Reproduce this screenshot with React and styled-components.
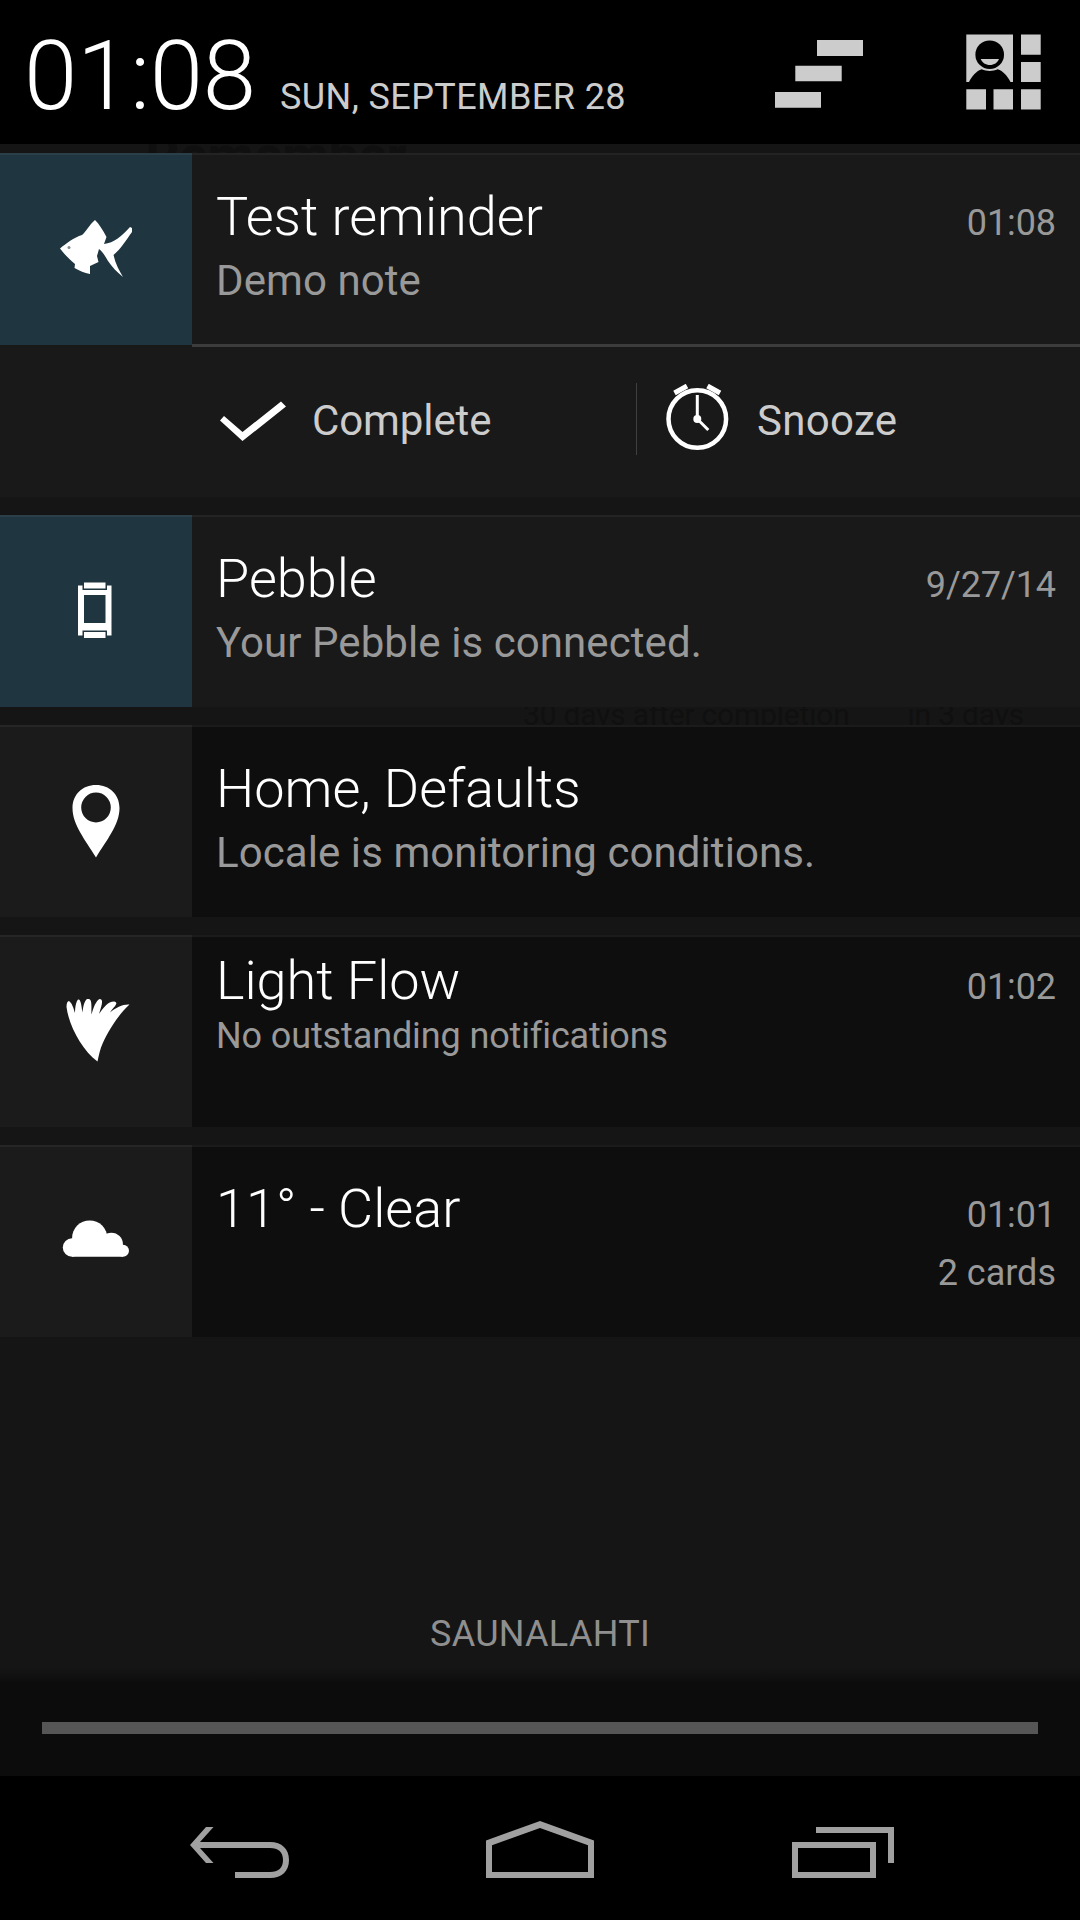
import React from 'react';
import styled, { createGlobalStyle } from 'styled-components';

const GlobalStyle = createGlobalStyle`
    * {
        box-sizing: border-box;
    }
    body {
        margin: 0;
        background: #000;
        font-family: Roboto, 'Liberation Sans', sans-serif;
    }
    svg {
        display: block;
        flex: none;
    }
`;

const Screen = styled.div`
    width: 1080px;
    height: 1920px;
    display: flex;
    flex-direction: column;
    background: #151515;
    overflow: hidden;
`;

const Header = styled.header`
    height: 144px;
    flex: none;
    display: flex;
    background: #000;
`;

const HeaderText = styled.div`
    flex: 1;
    display: flex;
    align-items: baseline;
    padding: 20px 0 0 24px;
    white-space: nowrap;
`;

const Clock = styled.div`
    width: 256px;
    font-size: 96px;
    line-height: 112px;
    font-weight: 300;
    letter-spacing: -0.3px;
    color: #fff;
`;

const DateText = styled.div`
    font-size: 36px;
    letter-spacing: 0.42px;
    color: #ccc;
`;

const HeaderIcons = styled.div`
    display: flex;
    gap: 102px;
    padding: 34px 39px 0 0;
`;

// strip between two notifications, the app underneath shines through a little
const Gap = styled.div`
    height: ${props => props.$height}px;
    flex: none;
    display: flex;
    justify-content: ${props => props.$end ? 'flex-end' : 'flex-start'};
    padding: ${props => props.$pad};
    overflow: hidden;
    background: #151515;
`;

const Ghost = styled.div`
    font-size: ${props => props.$size}px;
    line-height: ${props => props.$line}px;
    margin-top: ${props => props.$shift}px;
    font-weight: ${props => props.$bold ? 700 : 400};
    letter-spacing: ${props => props.$bold ? -0.6 : -0.2}px;
    color: #101010;
    white-space: pre;
`;

const Row = styled.section`
    height: 192px;
    flex: none;
    display: flex;
    background: ${props => props.$dark ? '#0e0e0e' : '#191919'};
    box-shadow: inset 0 2px 0 ${props => props.$dark ? '#1b1b1b' : '#232323'};
`;

const IconCell = styled.div`
    width: 192px;
    height: 192px;
    flex: none;
    display: flex;
    align-items: center;
    justify-content: center;
    background: ${props => props.$teal ? '#1f353f' : '#1b1b1b'};
    box-shadow: inset 0 2px 0 ${props => props.$teal ? '#2a3f47' : '#262626'};
`;

const Content = styled.div`
    flex: 1;
    padding: ${props => props.$compact ? 14 : 32}px 24px 0 24px;
    border-bottom: ${props => props.$line ? '1px solid #3c3c3c' : 'none'};
`;

const Line = styled.div`
    display: flex;
    justify-content: space-between;
    align-items: baseline;
    white-space: nowrap;
`;

const Title = styled.div`
    font-size: 54px;
    line-height: 64px;
    font-weight: 300;
    color: #fff;
`;

const Time = styled.div`
    font-size: 36px;
    letter-spacing: -0.1px;
    color: #999;
`;

const SubText = styled.div`
    margin-top: ${props => props.$small ? 2 : 7}px;
    font-size: ${props => props.$small ? 36 : 42}px;
    line-height: ${props => props.$small ? 42 : 50}px;
    letter-spacing: ${props => props.$small ? -0.12 : 0.08}px;
    color: #999;
    white-space: nowrap;
`;

const CardCount = styled.div`
    margin-top: 11px;
    font-size: 36px;
    line-height: 42px;
    color: #999;
    text-align: right;
`;

const Actions = styled.div`
    height: 152px;
    flex: none;
    display: flex;
    padding-left: 192px;
    background: #191919;
`;

const ActionArea = styled.div`
    flex: 1;
    display: grid;
    grid-template-columns: 444px 1fr;
    border-top: 2px solid #3c3c3c;
`;

const Action = styled.div`
    height: 72px;
    margin-top: 36px;
    display: flex;
    align-items: center;
    padding-left: ${props => props.$divider ? 29 : 26}px;
    border-left: 1px solid ${props => props.$divider ? '#3f3f3f' : 'transparent'};
`;

const ActionLabel = styled.span`
    margin: 4px 0 0 ${props => props.$offset}px;
    font-size: 42px;
    line-height: 50px;
    letter-spacing: ${props => props.$spacing || 0}px;
    color: #ccc;
`;

const Carrier = styled.div`
    flex: 1;
    display: flex;
    align-items: flex-end;
    justify-content: center;
    padding-bottom: 13px;
    font-size: 36px;
    line-height: 42px;
    letter-spacing: 0.3px;
    color: #8f8f8f;
`;

const Handle = styled.div`
    height: 108px;
    flex: none;
    display: flex;
    align-items: center;
    padding: 12px 42px 0;
    background: linear-gradient(#151515, #0c0c0c 16px, #0c0c0c);
`;

const HandleBar = styled.div`
    width: 100%;
    height: 12px;
    background: #565656;
`;

const NavBar = styled.nav`
    height: 144px;
    flex: none;
    display: grid;
    grid-template-columns: 296px 304px 302px;
    padding: 4px 86px 0 92px;
    align-items: center;
    justify-items: center;
    background: #000;
`;

const ClearIcon = () => (
    <svg width="90" height="76" viewBox="774 34 90 76" fill="#ccc">
        <path d="M817 40h46v16h-46zM795.3 65.7h46.4v15.6h-46.4zM775 92h46v15.7h-46z" />
    </svg>
);

const QuickSettingsIcon = () => (
    <svg width="75" height="76" viewBox="966 34 75 76" fill="#ccc">
        <path d="M966.3 34.5H1013V82h-46.7zM1021 34.5h19.7v20.2H1021zM1021 62h19.7v20H1021zM1021 89.2h19.7v20.3H1021zM966.3 89.2H986v20.3h-19.7zM993.5 89.2h19.5v20.3h-19.5z" />
        <path d="M969 82c3-6 7.500-11 12.700-12.700 5 2.300 11 2.300 16 0C1003 71 1007.500 76 1010.500 82z" fill="#000" />
        <circle cx="989.700" cy="54.700" r="14.300" fill="#000" />
        <path d="M980.700 59h18.300c-1.500 3.800-5 6-9.150 6s-7.650-2.200-9.150-6z" />
    </svg>
);

const FishIcon = () => (
    <svg width="72" height="64" viewBox="60 217 72 64" fill="#fff">
        <path d="M60 248.500c6-5 14-11 22-13.500 4-3 7-10 13-15 4 4 8 10 11.500 17l-2.500 7c10-1 18-8 26-17l2 1v4c-6 8-11 17-18.500 23 2 9 6 16 9.500 22-6-5-11-10-15-16-3-5-5-9-9-12l-2 7 1.500 6-8.500 4v8c-6-1-10-3-15.500-6l.5-4c-6-5-10-9-15-15.500z" />
        <circle cx="69" cy="247.500" r="1.500" fill="#8a8a8a" />
    </svg>
);

const PebbleIcon = () => (
    <svg width="36" height="58" viewBox="78 582 36 58" fill="#fff">
        <path fillRule="evenodd" d="M84 582.500h21.500v6H84zM84 632h21.500v6H84zM78 585.500h4.500v4.500h24.500v-4.500h4.500v50H107V630.500H82.500v5H78zM84 595v28h21.500v-28z" />
    </svg>
);

const PinIcon = () => (
    <svg width="48" height="74" viewBox="72 784 48 74" fill="#fff">
        <path fillRule="evenodd" d="M96 785c13.500 0 23.500 9.500 23.500 23 0 17-13 32-23.500 49.500C85.500 840 72.500 825 72.500 808c0-13.500 10-23 23.500-23zm0 7.500a14.800 15 0 1 0 0 30 14.800 15 0 1 0 0-30z" />
    </svg>
);

const FeatherIcon = () => (
    <svg width="68" height="64" viewBox="62 999 68 64" fill="#fff">
        <path d="M97.500 1061.500C82 1050 69 1026 66.500 1007c0-4 1-6 2.500-6 3 2 4.500 7 6 12 0-6 1-11 3-13.500 3-1 3.500 7 4.500 13 .5-5 1.500-11 4.500-13.500 6-1.500 4 8 4.500 15.500 2-7 4-13 8-15.500 5 0 1.500 8-.5 15 4-6 9-12.500 15-12.500 6 1-1 6-4 11 6-5 13-8.500 19.500-8-12 11-23 29-28.500 43-1.500 5-2.500 9-3.500 14z" />
    </svg>
);

const CloudIcon = () => (
    <svg width="68" height="42" viewBox="62 1220 68 42" fill="#fff">
        <circle cx="89.700" cy="1238" r="17.600" />
        <circle cx="72" cy="1247.500" r="9.200" />
        <circle cx="111.400" cy="1244.200" r="11.500" />
        <circle cx="123" cy="1250.700" r="6" />
        <path d="M72 1242h45l6 6v8.700H72z" />
    </svg>
);

const CheckIcon = () => (
    <svg width="68" height="46" viewBox="219 396 68 46" fill="#fff">
        <path d="M220 420.500l4-4.500 18.500 16L281 401.500l5 5L242.500 441z" />
    </svg>
);

const AlarmIcon = () => (
    <svg width="64" height="70" viewBox="666 384 64 70" fill="none" stroke="#fff">
        <circle cx="697.300" cy="419" r="28.800" strokeWidth="4.500" />
        <path d="M674.500 393l12.500-7M707.500 386l12.500 7" strokeWidth="5" />
        <path d="M697.300 395v24l11 11" strokeWidth="3" />
        <circle cx="697.300" cy="419" r="4" fill="#fff" stroke="none" />
    </svg>
);

const BackIcon = () => (
    <svg width="100" height="60" viewBox="190 1820 100 60" fill="#a0a0a0">
        <path d="M190 1845l16-18h7.500l-13.500 15h70c12 0 19 7 19 18s-7 18-19 18h-35v-6h35c8.500 0 13-4 13-12s-4.500-12-13-12h-70l13.500 15H206z" />
    </svg>
);

const HomeIcon = () => (
    <svg width="108" height="60" viewBox="486 1820 108 60" fill="#a0a0a0">
        <path fillRule="evenodd" d="M540 1821l54 19.500V1878H486v-37.500zM540 1828l-48 17.200V1872h96v-26.800z" />
    </svg>
);

const RecentIcon = () => (
    <svg width="102" height="60" viewBox="792 1820 102 60" fill="#a0a0a0">
        <path fillRule="evenodd" d="M816 1827h78v36h-6v-30h-72zM792 1842h84v36h-84zM798 1848v24h72v-24z" />
    </svg>
);

const notifications = [
    { id: 'reminder', icon: <FishIcon />, teal: true, title: 'Test reminder', time: '01:08', text: 'Demo note', actions: true },
    { id: 'pebble', icon: <PebbleIcon />, teal: true, title: 'Pebble', time: '9/27/14', text: 'Your Pebble is connected.' },
    { id: 'locale', icon: <PinIcon />, title: 'Home, Defaults', text: 'Locale is monitoring conditions.' },
    { id: 'lightflow', icon: <FeatherIcon />, title: 'Light Flow', time: '01:02', text: 'No outstanding notifications', compact: true },
    { id: 'weather', icon: <CloudIcon />, title: '11° - Clear', time: '01:01', cards: '2 cards' },
];

const Notification = ({ icon, teal, title, time, text, cards, compact, actions }) => (
    <>
        <Row $dark={!teal}>
            <IconCell $teal={teal}>{icon}</IconCell>
            <Content $compact={compact} $line={actions}>
                <Line>
                    <Title>{title}</Title>
                    {time && <Time>{time}</Time>}
                </Line>
                {text && <SubText $small={compact}>{text}</SubText>}
                {cards && <CardCount>{cards}</CardCount>}
            </Content>
        </Row>
        {actions && (
            <Actions>
                <ActionArea>
                    <Action>
                        <CheckIcon />
                        <ActionLabel $offset={25} $spacing={-0.1}>Complete</ActionLabel>
                    </Action>
                    <Action $divider>
                        <AlarmIcon />
                        <ActionLabel $offset={27} $spacing={0.3}>Snooze</ActionLabel>
                    </Action>
                </ActionArea>
            </Actions>
        )}
    </>
);

const App = () => {
    return (
        <Screen>
            <GlobalStyle />
            <Header>
                <HeaderText>
                    <Clock>01:08</Clock>
                    <DateText>SUN, SEPTEMBER 28</DateText>
                </HeaderText>
                <HeaderIcons>
                    <ClearIcon />
                    <QuickSettingsIcon />
                </HeaderIcons>
            </Header>
            <Gap $height={9} $pad="0 0 0 145px">
                <Ghost $size={54} $line={64} $shift={-20} $bold>Remember</Ghost>
            </Gap>
            {notifications.map((item, i) => (
                <React.Fragment key={item.id}>
                    {i > 0 && (
                        <Gap $height={18} $end $pad="0 56px 0 0">
                            {i === 2 && <Ghost $size={30} $line={36} $shift={-10}>30 days after completion        in 3 days</Ghost>}
                        </Gap>
                    )}
                    <Notification {...item} />
                </React.Fragment>
            ))}
            <Carrier>SAUNALAHTI</Carrier>
            <Handle>
                <HandleBar />
            </Handle>
            <NavBar>
                <BackIcon />
                <HomeIcon />
                <RecentIcon />
            </NavBar>
        </Screen>
    );
};

export default App;
